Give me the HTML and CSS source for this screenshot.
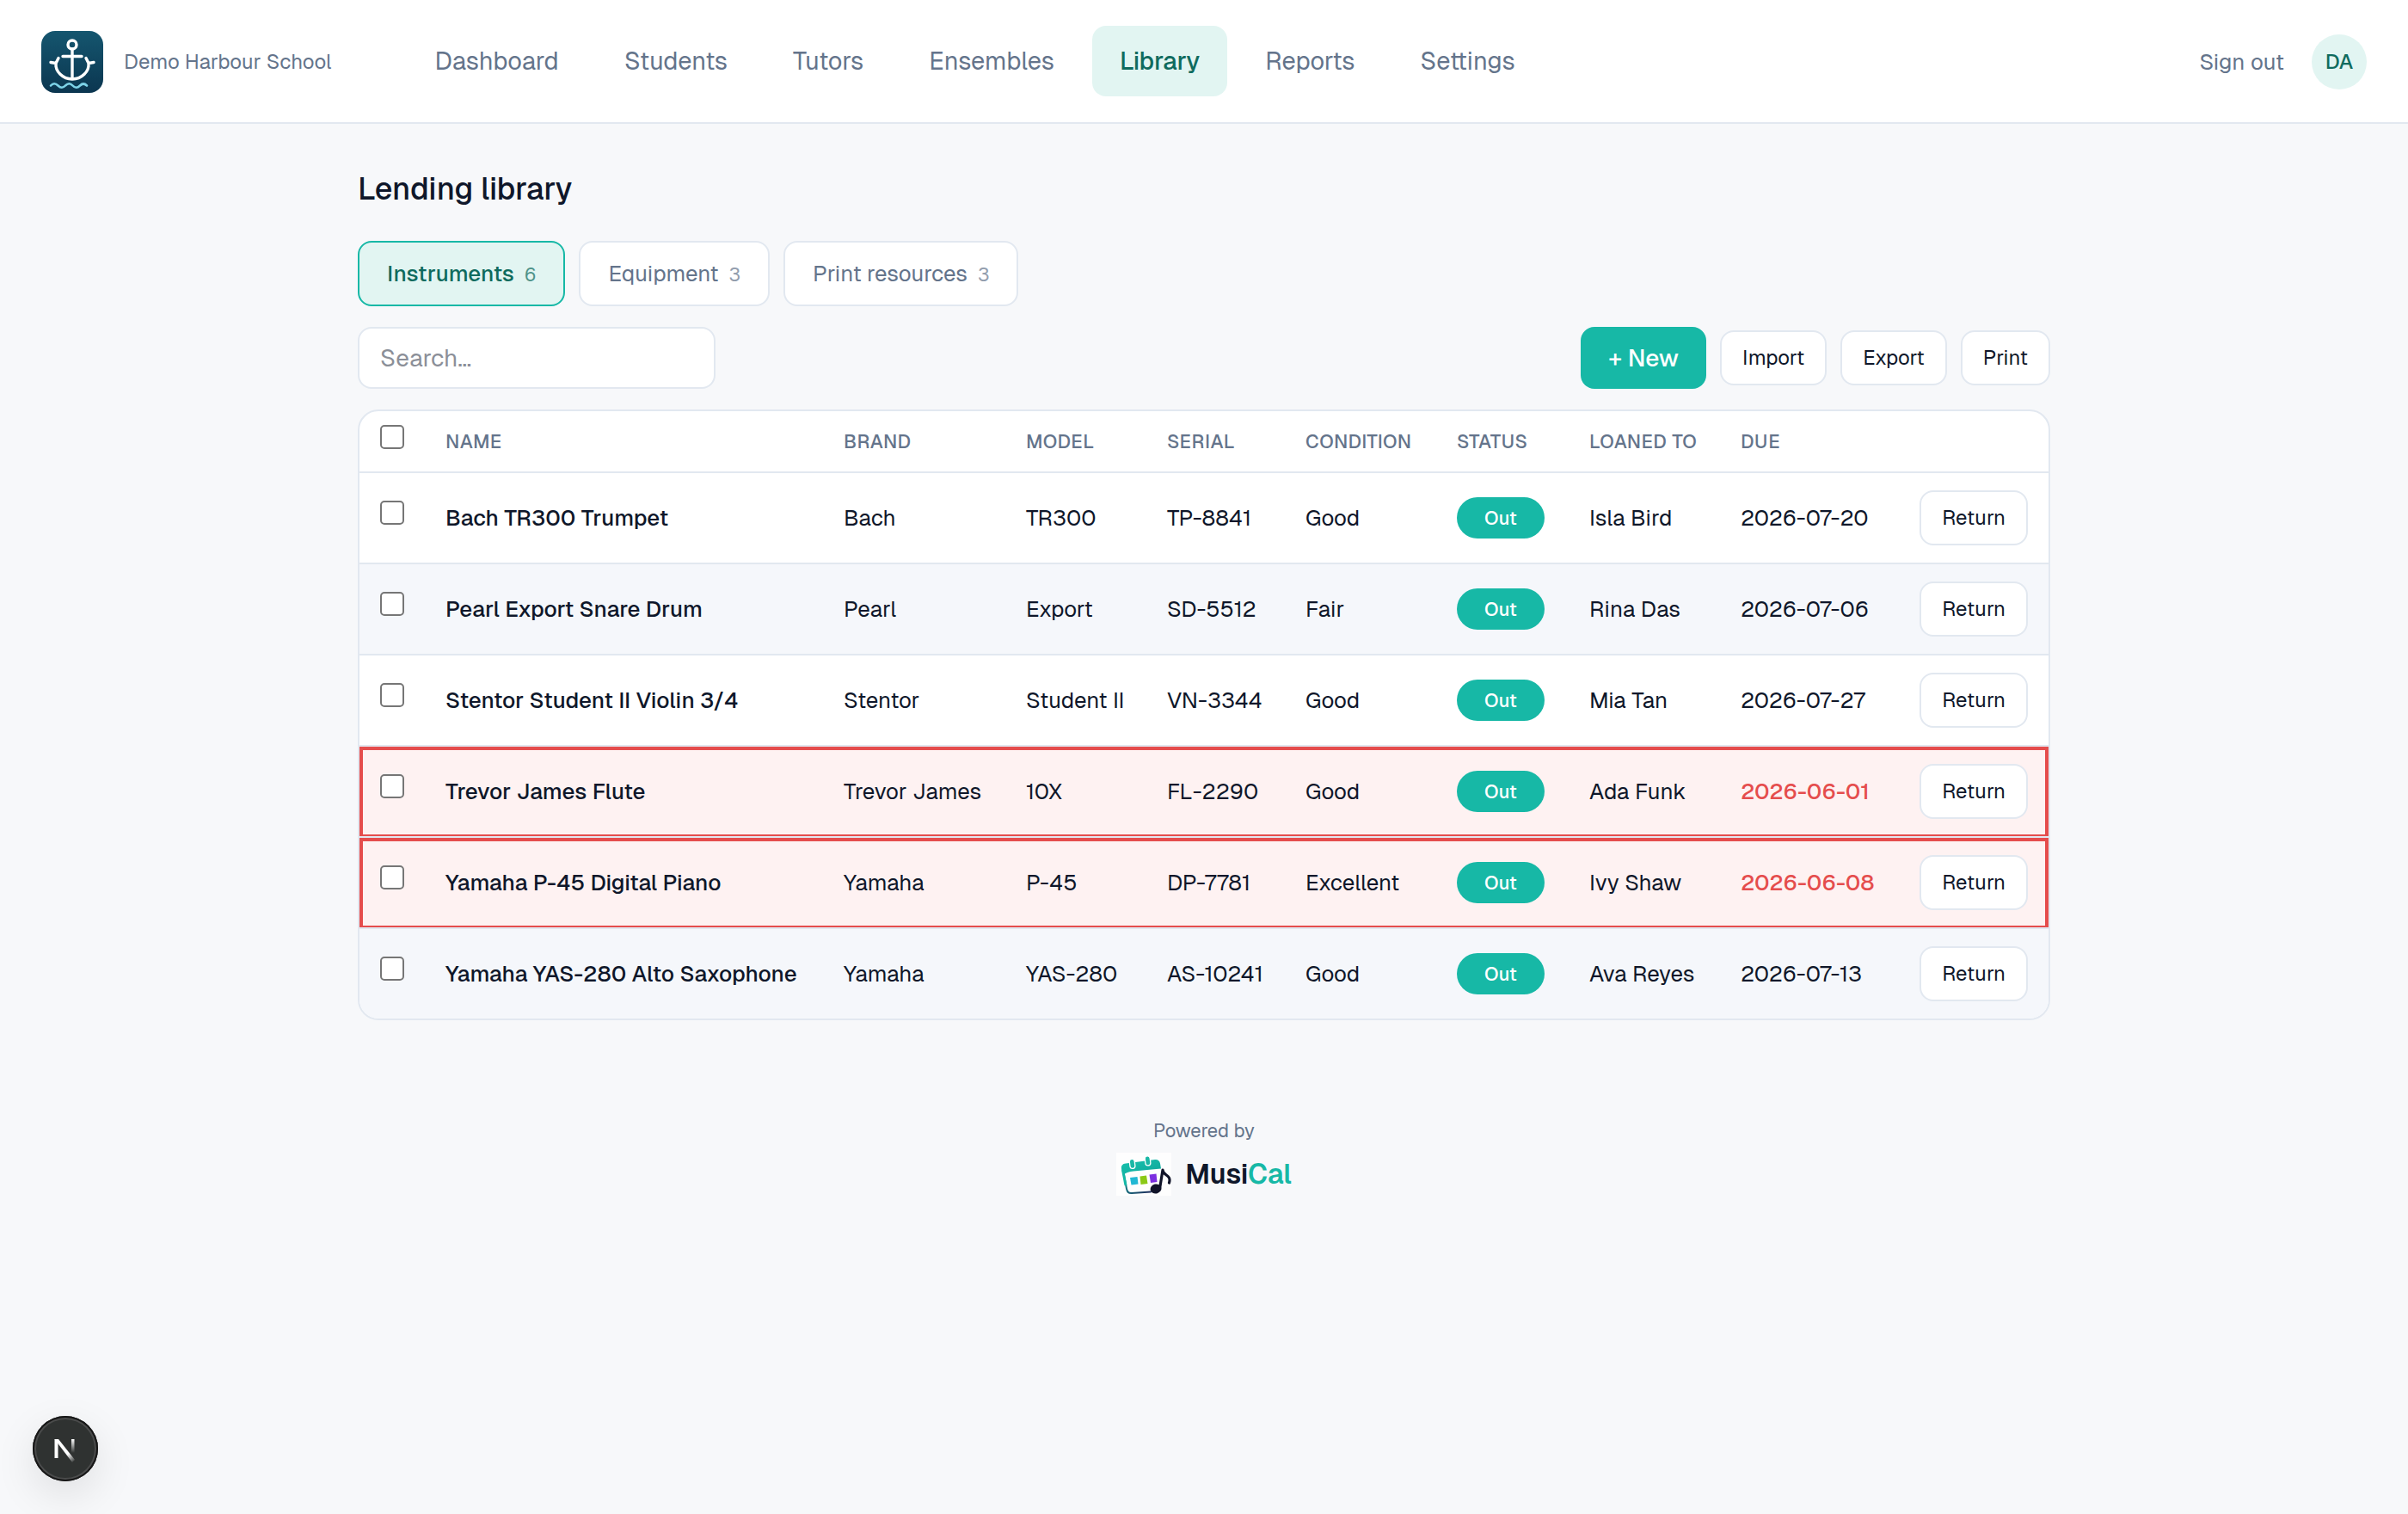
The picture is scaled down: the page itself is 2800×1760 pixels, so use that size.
FILE: index.html
```html
<!DOCTYPE html>
<html lang="en">
<head>
<meta charset="utf-8">
<title>Lending library</title>
<meta name="viewport" content="width=device-width, initial-scale=1">
<link rel="stylesheet" href="styles.css">
</head>
<body>
<header class="topbar">
  <a class="school" href="#">
    <svg class="school-logo" viewBox="0 0 72 72" aria-hidden="true">
      <defs><linearGradient id="sea" x1="0" y1="0" x2="0" y2="1"><stop offset="0" stop-color="#15566f"/><stop offset="1" stop-color="#0b3650"/></linearGradient></defs>
      <rect width="72" height="72" rx="16" fill="url(#sea)"/>
      <g fill="none" stroke="#fff" stroke-width="3.4" stroke-linecap="round" stroke-linejoin="round">
        <circle cx="36" cy="16" r="5"/>
        <path d="M36 21V54M25 29.500H47"/>
        <path d="M20 31.500L17 37.500C16 47 25 56 36 56S56 47 55 37.500L52 31.500M11 36.500L17 37.500M61 36.500L55 37.500"/>
      </g>
      <path d="M11 63.500q4-4.500 8.500 0t8.500 0q4.500-4.500 8.500 0t8.500 0q4-4 8 0" fill="none" stroke="#7dd3e8" stroke-width="2.600" stroke-linecap="round"/>
    </svg>
    <span>Demo Harbour School</span>
  </a>
  <nav class="nav" aria-label="Main">
    <a href="#">Dashboard</a>
    <a href="#">Students</a>
    <a href="#">Tutors</a>
    <a href="#">Ensembles</a>
    <a href="#" class="active" aria-current="page">Library</a>
    <a href="#">Reports</a>
    <a href="#">Settings</a>
  </nav>
  <div class="account">
    <button type="button" class="signout">Sign out</button>
    <span class="avatar">DA</span>
  </div>
</header>

<main class="page">
  <h1>Lending library</h1>
  <div class="tabs">
    <a href="#" class="tab active">Instruments <span class="count">6</span></a>
    <a href="#" class="tab">Equipment <span class="count">3</span></a>
    <a href="#" class="tab">Print resources <span class="count">3</span></a>
  </div>
  <div class="toolbar">
    <input class="search" type="search" placeholder="Search…" aria-label="Search">
    <div class="actions">
      <button type="button" class="primary">+ New</button>
      <button type="button" class="btn">Import</button>
      <button type="button" class="btn">Export</button>
      <button type="button" class="btn">Print</button>
    </div>
  </div>

  <div class="card">
    <table class="items">
      <colgroup>
        <col class="c-check"><col class="c-name"><col class="c-brand"><col class="c-model"><col class="c-serial"><col class="c-condition"><col class="c-status"><col class="c-loaned"><col class="c-due"><col class="c-action">
      </colgroup>
      <thead>
        <tr><th class="pick"><input type="checkbox" aria-label="Select all"></th><th>Name</th><th>Brand</th><th>Model</th><th>Serial</th><th>Condition</th><th>Status</th><th>Loaned to</th><th>Due</th><th></th></tr>
      </thead>
      <tbody>
        <tr><td class="pick"><input type="checkbox" aria-label="Select Bach TR300 Trumpet"></td><td class="name">Bach TR300 Trumpet</td><td>Bach</td><td>TR300</td><td>TP-8841</td><td>Good</td><td><span class="badge">Out</span></td><td>Isla Bird</td><td>2026-07-20</td><td class="action"><button type="button" class="btn">Return</button></td></tr>
        <tr><td class="pick"><input type="checkbox" aria-label="Select Pearl Export Snare Drum"></td><td class="name">Pearl Export Snare Drum</td><td>Pearl</td><td>Export</td><td>SD-5512</td><td>Fair</td><td><span class="badge">Out</span></td><td>Rina Das</td><td>2026-07-06</td><td class="action"><button type="button" class="btn">Return</button></td></tr>
        <tr><td class="pick"><input type="checkbox" aria-label="Select Stentor Student II Violin 3/4"></td><td class="name">Stentor Student II Violin 3/4</td><td>Stentor</td><td>Student II</td><td>VN-3344</td><td>Good</td><td><span class="badge">Out</span></td><td>Mia Tan</td><td>2026-07-27</td><td class="action"><button type="button" class="btn">Return</button></td></tr>
        <tr class="overdue"><td class="pick"><input type="checkbox" aria-label="Select Trevor James Flute"></td><td class="name">Trevor James Flute</td><td>Trevor James</td><td>10X</td><td>FL-2290</td><td>Good</td><td><span class="badge">Out</span></td><td>Ada Funk</td><td class="due">2026-06-01</td><td class="action"><button type="button" class="btn">Return</button></td></tr>
        <tr class="overdue"><td class="pick"><input type="checkbox" aria-label="Select Yamaha P-45 Digital Piano"></td><td class="name">Yamaha P-45 Digital Piano</td><td>Yamaha</td><td>P-45</td><td>DP-7781</td><td>Excellent</td><td><span class="badge">Out</span></td><td>Ivy Shaw</td><td class="due">2026-06-08</td><td class="action"><button type="button" class="btn">Return</button></td></tr>
        <tr><td class="pick"><input type="checkbox" aria-label="Select Yamaha YAS-280 Alto Saxophone"></td><td class="name">Yamaha YAS-280 Alto Saxophone</td><td>Yamaha</td><td>YAS-280</td><td>AS-10241</td><td>Good</td><td><span class="badge">Out</span></td><td>Ava Reyes</td><td>2026-07-13</td><td class="action"><button type="button" class="btn">Return</button></td></tr>
      </tbody>
    </table>
  </div>
</main>

<footer class="footer">
  <span class="powered">Powered by</span>
  <a class="brand" href="#">
    <svg class="brand-logo" viewBox="0 0 64 50" aria-hidden="true">
      <defs>
        <linearGradient id="teal" x1="0" y1="0" x2="1" y2="1"><stop offset="0" stop-color="#19c3ae"/><stop offset="1" stop-color="#0ea59a"/></linearGradient>
        <linearGradient id="edge" x1="0" y1="0" x2="1" y2="1"><stop offset="0" stop-color="#14b8a6"/><stop offset="1" stop-color="#1e2a5a"/></linearGradient>
      </defs>
      <rect width="64" height="50" fill="#fefefe"/>
      <path d="M7.500 18L12 42Q13 47.500 18 47L40 45.500" fill="none" stroke="url(#edge)" stroke-width="2" stroke-linecap="round"/>
      <path d="M7.500 20L11 38" fill="none" stroke="#14b8a6" stroke-width="3"/>
      <path d="M6 19Q5 13 11 12.500L45 8Q50 7.500 51 12.500L52 18.500L20 21.500Q12 22 8 26Z" fill="url(#teal)"/>
      <rect x="15.500" y="7.500" width="6" height="11" rx="3" transform="rotate(-7 18 12)" fill="#19b8a6" stroke="#fff" stroke-width="1.300"/>
      <rect x="33.500" y="4" width="6" height="11" rx="3" transform="rotate(-7 36 9)" fill="#19b8a6" stroke="#fff" stroke-width="1.300"/>
      <path d="M16 29L24.500 28L25.500 36.500L17.500 37.500Z" fill="#22b8d4"/>
      <path d="M27.500 27.500L35 26.500L36.500 36L28.500 37Z" fill="#8bc916"/>
      <path d="M38.500 25.500L46.500 24.500L47.500 34L40 35Z" fill="#7c2fe0"/>
      <ellipse cx="46" cy="42" rx="6.500" ry="5.500" transform="rotate(-12 46 42)" fill="#11142a"/>
      <path d="M50.500 42L54 20C54 27 64.500 25 61.500 35" fill="none" stroke="#11142a" stroke-width="3.200" stroke-linejoin="round" stroke-linecap="round"/>
    </svg>
    <span class="wordmark">Musi<span class="accent">Cal</span></span>
  </a>
</footer>

<button type="button" class="devtools" aria-label="Open developer tools">
  <svg viewBox="0 0 76 76" aria-hidden="true">
    <defs>
      <linearGradient id="slash" x1="36" y1="38" x2="48" y2="54" gradientUnits="userSpaceOnUse"><stop offset=".4" stop-color="#fff"/><stop offset="1" stop-color="#fff" stop-opacity="0"/></linearGradient>
      <linearGradient id="stem" x1="0" y1="27" x2="0" y2="43" gradientUnits="userSpaceOnUse"><stop offset="0" stop-color="#fff"/><stop offset="1" stop-color="#fff" stop-opacity="0"/></linearGradient>
    </defs>
    <path d="M25.500 49V27H29.500V49Z" fill="#fff"/>
    <path d="M25.500 27H30L49 51L46 54Z" fill="url(#slash)"/>
    <path d="M45 27H48.500V43H45Z" fill="url(#stem)"/>
  </svg>
</button>
</body>
</html>
```

FILE: styles.css
```css
:root {
  --ink: #0f172a;
  --muted: #64748b;
  --line: #e2e8f0;
  --bg: #f7f8fa;
  --teal: #17b8a6;
  --teal-dark: #0f6b5e;
  --teal-soft: #e2f5f2;
  --red: #e54d4d;
}

* { box-sizing: border-box; }

body {
  margin: 0;
  min-height: 100vh;
  background: var(--bg);
  color: var(--ink);
  font: 400 26px/40px Geist, Inter, "Liberation Sans", sans-serif;
}

a { color: inherit; text-decoration: none; }
button, input { font: inherit; color: inherit; margin: 0; }
button { cursor: pointer; }

.topbar {
  display: flex;
  align-items: center;
  min-height: 144px;
  padding: 30px 48px 28px;
  background: #fff;
  border-bottom: 2px solid var(--line);
  color: var(--muted);
}
.school { display: flex; align-items: center; gap: 24px; font-size: 24px; }
.school-logo { display: block; width: 72px; height: 72px; }
.nav { display: flex; align-self: flex-start; gap: 12px; margin-left: 88px; font-size: 29px; }
.nav a { padding: 21px 32px; border-radius: 16px; }
.nav .active { background: var(--teal-soft); color: var(--teal-dark); font-weight: 500; }
.account { display: flex; align-items: center; gap: 32px; margin-left: auto; }
.signout { padding: 0; border: 0; background: none; }
.avatar {
  display: grid;
  place-items: center;
  width: 64px;
  height: 64px;
  border-radius: 50%;
  background: var(--teal-soft);
  color: var(--teal-dark);
  font-size: 24px;
  font-weight: 500;
}

.page { max-width: 2064px; margin: 0 auto; padding: 48px; }
h1 { margin: 0 0 32px; font-size: 36px; line-height: 56px; font-weight: 500; }

.tabs { display: flex; gap: 16px; margin-bottom: 24px; }
.tab {
  display: flex;
  align-items: baseline;
  gap: 12px;
  padding: 16px 32px;
  border: 2px solid var(--line);
  border-radius: 16px;
  background: #fff;
  color: var(--muted);
}
.tab.active { border-color: var(--teal); background: var(--teal-soft); color: var(--teal-dark); font-weight: 500; }
.count { font-size: 22px; line-height: 24px; font-weight: 400; opacity: .7; }

.toolbar { display: flex; align-items: center; justify-content: space-between; margin-bottom: 24px; }
.search {
  width: 416px;
  height: 72px;
  padding: 0 24px;
  border: 2px solid var(--line);
  border-radius: 16px;
  background: #fff;
  font-size: 28px;
  appearance: none;
}
.search::placeholder { color: #8b8f98; opacity: 1; }
.actions { display: flex; align-items: center; gap: 16px; }
.btn {
  padding: 10px 24px;
  border: 2px solid var(--line);
  border-radius: 16px;
  background: #fff;
  font-size: 24px;
}
.primary {
  padding: 16px 32px;
  border: 0;
  border-radius: 16px;
  background: var(--teal);
  color: #fff;
  font-size: 28px;
  font-weight: 500;
}

.card { overflow: hidden; border: 2px solid var(--line); border-radius: 24px; background: #fff; }
.items { width: 100%; table-layout: fixed; border-collapse: separate; border-spacing: 0; }
.c-check { width: 76px; }
.c-name { width: 463px; }
.c-brand { width: 212px; }
.c-model { width: 164px; }
.c-serial { width: 161px; }
.c-condition { width: 176px; }
.c-status { width: 154px; }
.c-loaned { width: 176px; }
.c-due { width: 208px; }
.c-action { width: 174px; }

.items th {
  height: 72px;
  padding: 0 24px;
  border-bottom: 2px solid var(--line);
  color: var(--muted);
  font-size: 22px;
  font-weight: 500;
  letter-spacing: .025em;
  text-align: left;
  text-transform: uppercase;
  white-space: nowrap;
}
.items td { height: 106px; padding: 0 24px; border-bottom: 2px solid var(--line); white-space: nowrap; }
.items tbody tr:last-child td { height: 104px; border-bottom: 0; }
.items tbody tr:nth-child(even) { background: #f5f7fb; }
.items tbody tr.overdue { background: #fef2f2; }
.items .pick { vertical-align: top; }
.items th.pick { padding-top: 16px; }
.items td.pick { padding-top: 32px; }
.items .action { text-align: right; }
.name { font-weight: 500; }
.pick input {
  display: block;
  width: 28px;
  height: 28px;
  border: 2px solid #767676;
  border-radius: 5px;
  background: #fff;
  appearance: none;
}
.overdue td { box-shadow: inset 0 4px var(--red), inset 0 -2px var(--red); }
.overdue td:first-child { box-shadow: inset 4px 0 var(--red), inset 0 4px var(--red), inset 0 -2px var(--red); }
.overdue td:last-child { box-shadow: inset -4px 0 var(--red), inset 0 4px var(--red), inset 0 -2px var(--red); }
.overdue .due { color: var(--red); font-weight: 500; }
.badge {
  display: block;
  width: fit-content;
  padding: 4px 32px;
  border-radius: 24px;
  background: var(--teal);
  color: #fff;
  font-size: 22px;
  font-weight: 500;
}

.footer { display: flex; flex-direction: column; align-items: center; padding: 60px 48px 48px; gap: 6px; }
.powered { color: var(--muted); font-size: 22px; }
.brand { display: flex; align-items: center; gap: 16px; }
.brand-logo { display: block; width: 64px; height: 50px; }
.wordmark { font-size: 32px; font-weight: 600; }
.accent { color: var(--teal); }

.devtools {
  position: fixed;
  left: 38px;
  bottom: 38px;
  width: 76px;
  height: 76px;
  padding: 0;
  border: 0;
  border-radius: 50%;
  background: #2f3231;
  box-shadow: inset 0 0 0 2px #171717, inset 0 0 0 4px #4a4b4b, 0 16px 48px rgba(0, 0, 0, .1);
}
.devtools svg { display: block; width: 76px; height: 76px; }
```
